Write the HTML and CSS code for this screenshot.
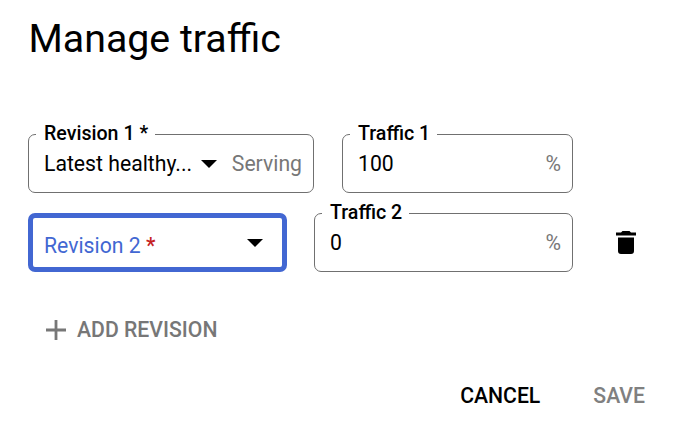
FILE: index.html
```html
<!DOCTYPE html>
<html lang="en">
<head>
<meta charset="utf-8">
<title>Manage traffic</title>
<link rel="stylesheet" href="styles.css">
</head>
<body>
<main class="dialog">
  <h1 class="title">Manage traffic</h1>
  <div class="rows">
    <div class="row row-first">
      <div class="field">
        <span class="label">Revision 1 *</span>
        <span class="value">Latest healthy...</span>
        <svg class="arrow" width="16" height="8" viewBox="0 0 16 8"><path d="M0 0h16L8 8z"/></svg>
        <span class="hint serving">Serving</span>
      </div>
      <div class="field">
        <span class="label">Traffic 1</span>
        <span class="value">100</span>
        <span class="hint percent">%</span>
      </div>
    </div>
    <div class="row row-second">
      <div class="field focused">
        <span class="placeholder">Revision 2 <span class="star">*</span></span>
        <svg class="arrow" width="16" height="8" viewBox="0 0 16 8"><path d="M0 0h16L8 8z"/></svg>
      </div>
      <div class="field">
        <span class="label">Traffic 2</span>
        <span class="value">0</span>
        <span class="hint percent">%</span>
      </div>
      <svg class="trash" width="20" height="23" viewBox="0 0 20 23"><path d="M6.500 0h7L15 1.500h5v3H0v-3h5zM2 6.500h16V20q0 3-3 3H5q-3 0-3-3z"/></svg>
    </div>
  </div>
  <button class="add"><svg width="20" height="20" viewBox="0 0 20 20"><path d="M10 0v20M0 10h20" stroke="currentColor" stroke-width="2.800"/></svg><span class="add-text">ADD REVISION</span></button>
  <div class="actions"><button class="cancel">CANCEL</button><button class="save">SAVE</button></div>
</main>
</body>
</html>
```

FILE: styles.css
```css
* { box-sizing: border-box; }
body { margin: 0; background: #fff; color: #000; font: 21.2px/26px Roboto, sans-serif; }
.dialog { width: 680px; height: 443px; padding: 15px 28px 0; }
.title { margin: 0 0 0 0.5px; font-size: 39.3px; line-height: 48px; font-weight: 400; }
.rows { margin-top: 71px; display: grid; gap: 20px; }
.row { display: grid; align-items: center; }
.row-first { grid-template-columns: 286px 231px; column-gap: 28px; }
.row-second { grid-template-columns: 259px 259px 20px; column-gap: 27px; }
.row-second .trash { margin-left: 16px; }
.field { position: relative; display: flex; align-items: center; height: 59px; padding: 0 11px 0 15px; border: 1px solid #707070; border-radius: 7px; white-space: nowrap; }
.label { position: absolute; top: -14px; left: 7px; padding: 0 7px 0 8px; background: #fff; font-size: 19.6px; font-weight: 500; }
.value { padding-top: 1px; }
.arrow { flex: none; }
.hint { padding-top: 1px; color: #777; }
.percent { margin-left: auto; }
.serving { margin-left: auto; }
.value + .arrow { margin-left: 9px; }
.focused { border: 5px solid #4267d2; padding-left: 11px; padding-right: 19px; }
.focused .arrow { margin-left: auto; }
.placeholder { padding-top: 6px; color: #4267d2; }
.star { color: #c5221f; font-weight: 500; }
button { border: 0; padding: 0; background: none; font: 500 21.2px/26px Roboto, sans-serif; color: inherit; }
.add { display: flex; align-items: center; gap: 11px; margin: 45px 0 0 18px; color: #777; }
.actions { display: flex; justify-content: flex-end; gap: 53px; margin-top: 40px; padding-right: 7px; }
.save { color: #808080; }
```
